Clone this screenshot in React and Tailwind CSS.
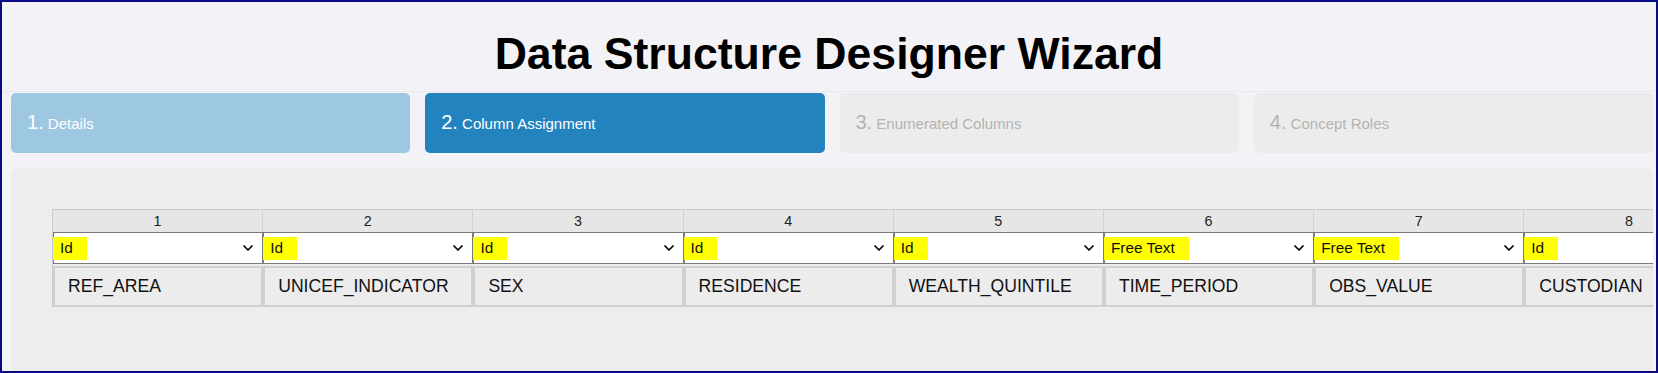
import { ChevronDown } from "lucide-react";

const steps = [
  { num: "1.", label: "Details", state: "done" },
  { num: "2.", label: "Column Assignment", state: "active" },
  { num: "3.", label: "Enumerated Columns", state: "todo" },
  { num: "4.", label: "Concept Roles", state: "todo" },
];

const columns = [
  { role: "Id", name: "REF_AREA" },
  { role: "Id", name: "UNICEF_INDICATOR" },
  { role: "Id", name: "SEX" },
  { role: "Id", name: "RESIDENCE" },
  { role: "Id", name: "WEALTH_QUINTILE" },
  { role: "Free Text", name: "TIME_PERIOD" },
  { role: "Free Text", name: "OBS_VALUE" },
  { role: "Id", name: "CUSTODIAN" },
];

const stepClass = {
  done: "bg-[#9ec8e1] text-white",
  active: "bg-[#2383bf] text-white",
  todo: "bg-[#ececec] text-[#b3b3b3]",
};

function StepBox({ step }) {
  return (
    <div className={`h-[60px] rounded-[5px] pl-4 pt-[17px] leading-[24px] ${stepClass[step.state]}`}>
      <span className="text-[20px]">{step.num}</span>
      <span className="text-[15px]"> {step.label}</span>
    </div>
  );
}

function ColumnCell({ index, col }) {
  return (
    <div className="w-[210.2px] shrink-0 flex flex-col">
      <div className="h-[22px] bg-[#e6e6e6] border-r border-[#d2d2d2] text-center text-[14.3px] leading-[22px] text-[#222]">
        {index + 1}
      </div>
      <div className="h-[32px] bg-white border border-[#7a7a7a] flex items-center justify-between pr-[6px]">
        <span className="bg-[#ffff00] h-[23px] flex items-center pl-[7px] pr-[14px] text-[15.4px] text-[#111] -ml-px">
          {col.role}
        </span>
        <ChevronDown size={16} strokeWidth={2.6} className="text-black" />
      </div>
      <div className="mt-[2px] h-[41px] bg-[#ececec] border-2 border-[#d0d0d0] flex items-center pl-[13px] text-[17.6px] text-[#111]">
        {col.name}
      </div>
    </div>
  );
}

export default function App() {
  return (
    <div className="w-[1658px] h-[373px] overflow-hidden border-2 border-[#0a0a85] bg-[#f3f3f7] font-['Liberation_Sans',Arial,sans-serif]">
      <div className="pt-[27px] pb-[12px] border-b border-[#e8e8ee] text-center">
        <h1 className="text-[44.6px] leading-[50px] font-bold text-black">Data Structure Designer Wizard</h1>
      </div>
      <div className="pl-[9px] pr-[3px] pt-px">
        <div className="grid grid-cols-4 gap-[15px]">
          {steps.map((s) => (
            <StepBox key={s.num} step={s} />
          ))}
        </div>
        <div className="mt-[15px] h-[220px] rounded-[6px] bg-[#ededed] pt-[41px] pl-[41px] overflow-hidden">
          <div className="flex border-t border-l border-[#cccccc] w-max">
            {columns.map((c, i) => (
              <ColumnCell key={i} index={i} col={c} />
            ))}
          </div>
        </div>
      </div>
    </div>
  );
}
